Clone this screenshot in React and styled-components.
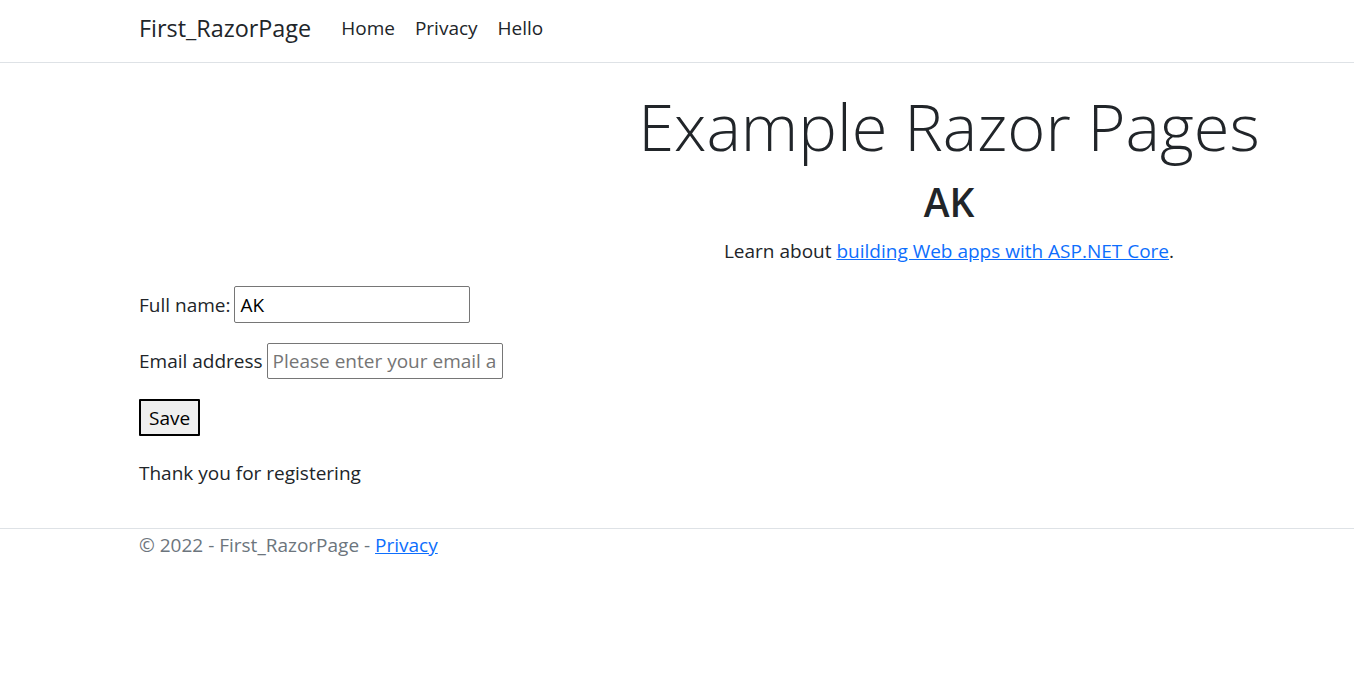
import React from 'react';
import styled, { createGlobalStyle } from 'styled-components';

const GlobalStyle = createGlobalStyle`
  html, body {
    margin: 0;
    padding: 0;
    background: #ffffff;
  }
  body {
    font-family: "Open Sans", "Noto Sans", "Liberation Sans", sans-serif;
    font-size: 19px;
    line-height: 30px;
    color: #212529;
  }
`;

const Navbar = styled.header`
  height: 63px;
  box-sizing: border-box;
  border-bottom: 1px solid #dee2e6;
`;

const NavInner = styled.nav`
  display: flex;
  align-items: center;
  height: 100%;
  padding: 0 139px 6px;
  box-sizing: border-box;
`;

const Brand = styled.a`
  font-size: 23.4px;
  color: #212529;
  text-decoration: none;
  margin-right: 20px;
`;

const NavLink = styled.a`
  padding: 0 10px;
  color: #212529;
  text-decoration: none;
`;

const Main = styled.main`
  padding: 21px 139px 20px;
`;

const Hero = styled.div`
  width: 680px;
  margin-left: 470px;
  text-align: center;
`;

const Display = styled.h1`
  margin: 0 0 10px;
  font-size: 65px;
  font-weight: 300;
  line-height: 84px;
  white-space: nowrap;
`;

const Name = styled.h2`
  margin: 0 0 10px;
  font-size: 39px;
  font-weight: 600;
  line-height: 48px;
`;

const Text = styled.p`
  margin: 0 0 20px;
`;

const Link = styled.a`
  color: #0d6efd;
  text-decoration: underline;
`;

const Field = styled.div`
  display: flex;
  align-items: center;
  gap: 4px;
  margin-bottom: 20px;
`;

const Input = styled.input`
  width: 236px;
  height: ${p => p.$h || 37}px;
  box-sizing: border-box;
  border: 1px solid #767676;
  border-radius: 2px;
  padding: 1px 5px;
  font: inherit;
  color: #000;

  &::placeholder {
    color: #757575;
  }
`;

const Button = styled.button`
  display: block;
  height: 37px;
  margin-bottom: 22px;
  padding: 0 8px;
  border: 2px solid #000;
  border-radius: 1px;
  background: #efefef;
  font: inherit;
  color: #000;
`;

const Footer = styled.footer`
  border-top: 1px solid #dee2e6;
  padding: 1px 139px 0;
  color: #6c757d;
`;

const App = () => {
  return (
    <>
      <GlobalStyle />
      <Navbar>
        <NavInner>
          <Brand href="#">First_RazorPage</Brand>
          <NavLink href="#">Home</NavLink>
          <NavLink href="#">Privacy</NavLink>
          <NavLink href="#">Hello</NavLink>
        </NavInner>
      </Navbar>
      <Main>
        <Hero>
          <Display>Example Razor Pages</Display>
          <Name>AK</Name>
          <Text>
            Learn about <Link href="#">building Web apps with ASP.NET Core</Link>.
          </Text>
        </Hero>
        <form onSubmit={e => e.preventDefault()}>
          <Field>
            <label>Full name:</label>
            <Input defaultValue="AK" />
          </Field>
          <Field>
            <label>Email address</label>
            <Input $h={36} placeholder="Please enter your email address" />
          </Field>
          <Button type="submit">Save</Button>
          <Text>Thank you for registering</Text>
        </form>
      </Main>
      <Footer>
        &copy; 2022 - First_RazorPage - <Link href="#">Privacy</Link>
      </Footer>
    </>
  );
};

export default App;
